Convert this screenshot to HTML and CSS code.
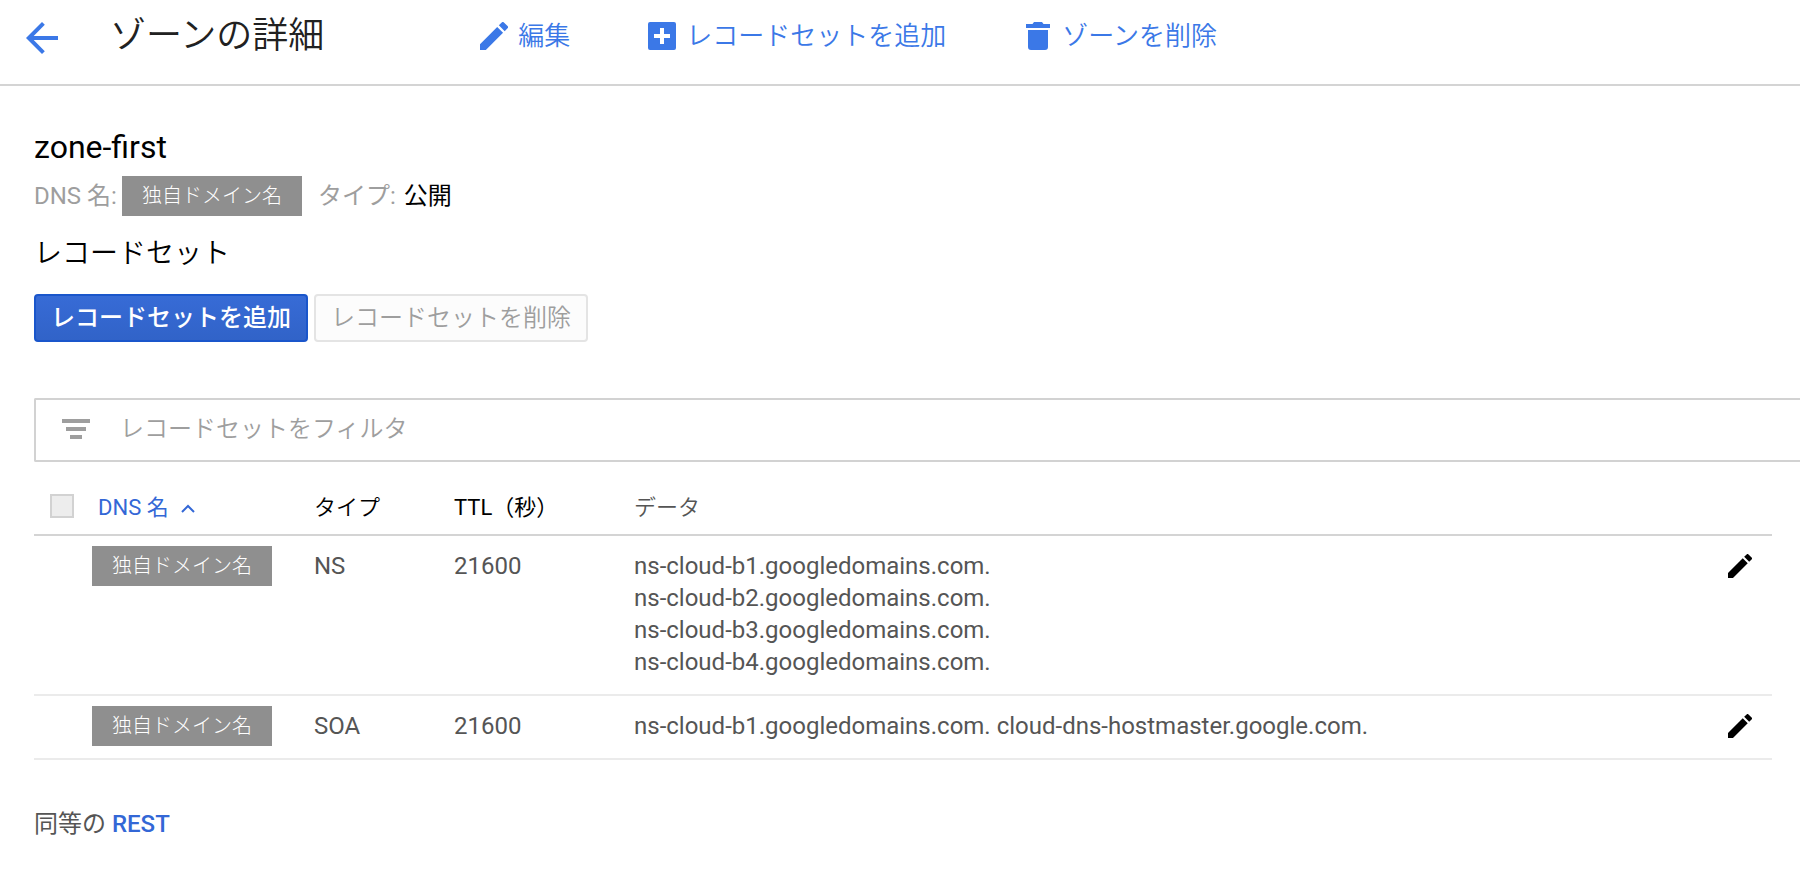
FILE: index.html
```html
<!DOCTYPE html>
<html lang="ja">
<head>
<meta charset="utf-8">
<title>ゾーンの詳細</title>
<link rel="stylesheet" href="styles.css">
</head>
<body>
<svg class="sprite" aria-hidden="true">
  <symbol id="pencil" viewBox="3 3 18 18"><path d="M3 17.25V21h3.75L17.81 9.94l-3.75-3.75L3 17.25zM20.71 7.04a1 1 0 0 0 0-1.41l-2.34-2.34a1 1 0 0 0-1.41 0l-1.83 1.83 3.75 3.75 1.83-1.83z"/></symbol>
</svg>
<header class="topbar">
  <a class="back" href="#" aria-label="戻る"><svg class="back-icon" viewBox="0 0 32 32"><path d="M32 14H7.700L18.800 2.800 16 0 0 16l16 16 2.800-2.800L7.700 18H32z"/></svg></a>
  <h1 class="title">ゾーンの詳細</h1>
  <nav class="actions">
    <button class="action" type="button"><svg class="action-icon"><use href="#pencil"/></svg>編集</button>
    <button class="action" type="button"><svg class="action-icon" viewBox="0 0 28 28"><path fill-rule="evenodd" d="M2 0h24a2 2 0 0 1 2 2v24a2 2 0 0 1-2 2H2a2 2 0 0 1-2-2V2a2 2 0 0 1 2-2zM12 6v6H6v4h6v6h4v-6h6v-4h-6V6z"/></svg>レコードセットを追加</button>
    <button class="action" type="button"><svg class="action-icon" viewBox="0 0 28 28"><path d="M4 8h20v17a3 3 0 0 1-3 3H7a3 3 0 0 1-3-3zM2 2h6.500L10 0h8l1.500 2H26v4H2z"/></svg>ゾーンを削除</button>
  </nav>
</header>
<main class="content">
  <h2 class="zone">zone-first</h2>
  <div class="meta">
    <span class="label">DNS 名:</span><span class="badge">独自ドメイン名</span>
    <span class="label kind">タイプ:</span><span>公開</span>
  </div>
  <h3 class="section">レコードセット</h3>
  <div class="buttons">
    <button class="btn primary" type="button">レコードセットを追加</button>
    <button class="btn" type="button" disabled>レコードセットを削除</button>
  </div>
  <label class="filter">
    <svg class="filter-icon" viewBox="0 0 28 20"><path d="M0 0h28v4H0zM4 8h20v4H4zM8 16h12v4H8z"/></svg>
    <input class="filter-input" type="text" placeholder="レコードセットをフィルタ" aria-label="レコードセットをフィルタ">
  </label>
  <table class="records">
    <thead>
      <tr>
        <th class="c-check"><input class="check" type="checkbox" aria-label="すべて選択" disabled></th>
        <th class="c-name"><a class="sort" href="#">DNS 名<svg class="caret" viewBox="0 0 14 9"><path d="M1 8l6-6 6 6"/></svg></a></th>
        <th class="c-type">タイプ</th>
        <th class="c-ttl">TTL（秒）</th>
        <th class="c-data">データ</th>
        <th class="c-edit"></th>
      </tr>
    </thead>
    <tbody>
      <tr>
        <td></td>
        <td><span class="badge">独自ドメイン名</span></td>
        <td>NS</td>
        <td>21600</td>
        <td>ns-cloud-b1.googledomains.com.<br>ns-cloud-b2.googledomains.com.<br>ns-cloud-b3.googledomains.com.<br>ns-cloud-b4.googledomains.com.</td>
        <td><button class="edit" type="button" aria-label="編集"><svg class="edit-icon"><use href="#pencil"/></svg></button></td>
      </tr>
      <tr>
        <td></td>
        <td><span class="badge">独自ドメイン名</span></td>
        <td>SOA</td>
        <td>21600</td>
        <td>ns-cloud-b1.googledomains.com. cloud-dns-hostmaster.google.com.</td>
        <td><button class="edit" type="button" aria-label="編集"><svg class="edit-icon"><use href="#pencil"/></svg></button></td>
      </tr>
    </tbody>
  </table>
  <p class="rest">同等の <a href="#">REST</a></p>
</main>
</body>
</html>
```
FILE: styles.css
```css
* { box-sizing: border-box; }
body {
  margin: 0;
  background: #fff;
  color: #000;
  font: 400 24px/32px Roboto, "Noto Sans CJK JP", sans-serif;
}
button, input { font: inherit; }
a { color: #3367d6; text-decoration: none; }
h1, h2, h3, p { margin: 0; font-weight: 400; }
.sprite { display: none; }

.topbar {
  display: flex;
  align-items: center;
  height: 86px;
  padding: 0 26px 12px;
  border-bottom: 2px solid #d4d4d4;
}
.back { display: flex; padding-top: 4px; }
.back-icon { width: 32px; height: 32px; fill: #3b78e7; }
.title {
  margin-left: 52px;
  font-size: 36px;
  font-weight: 350;
  line-height: 48px;
  color: #212121;
}
.actions { display: flex; gap: 78px; margin-left: 156px; }
.action {
  display: flex;
  align-items: center;
  gap: 10px;
  padding: 0;
  border: 0;
  background: none;
  color: #3b78e7;
  font-size: 26px;
  font-weight: 350;
}
.action-icon { width: 28px; height: 28px; fill: #3b78e7; }

.content { padding: 40px 28px 40px 34px; }
.zone { font-size: 32px; line-height: 42px; }
.meta { display: flex; align-items: center; margin-top: 8px; height: 40px; }
.label { color: #9e9e9e; }
.kind { margin: 0 8px 0 16px; }
.badge {
  display: inline-block;
  margin-left: 5px;
  padding: 0 20px;
  background: #8f8f8f;
  color: #fff;
  font-size: 20px;
  font-weight: 300;
  line-height: 40px;
}
.section { margin-top: 18px; font-size: 28px; font-weight: 350; line-height: 40px; }
.buttons { display: flex; gap: 6px; margin-top: 20px; }
.btn {
  height: 48px;
  padding: 0 15px;
  border: 2px solid #e4e4e4;
  border-radius: 4px;
  background: #fcfcfc;
  color: #9e9e9e;
  font-weight: 350;
  line-height: 44px;
}
.primary {
  border-color: #1a56cb;
  background: linear-gradient(#376bd6, #3163c8);
  color: #fff;
  font-weight: 500;
}
.filter {
  display: flex;
  align-items: center;
  gap: 30px;
  height: 64px;
  margin: 56px -28px 0 0;
  padding: 0 0 2px 26px;
  border: 2px solid #d2d2d2;
  border-right: 0;
  border-radius: 2px 0 0 2px;
}
.filter-icon { width: 28px; height: 20px; fill: #9e9e9e; }
.filter-input { flex: 1; padding: 0; border: 0; outline: 0; background: none; font-weight: 350; }
.filter-input::placeholder { color: #9e9e9e; }

.records {
  width: 100%;
  margin-top: 20px;
  border-collapse: separate;
  border-spacing: 0;
  table-layout: fixed;
  text-align: left;
}
.records th {
  height: 54px;
  padding: 0;
  border-bottom: 2px solid #d4d4d4;
  font-size: 22px;
  font-weight: 400;
}
.records td {
  padding: 14px 0 16px;
  border-bottom: 2px solid #ebebeb;
  color: #555;
  vertical-align: top;
}
.c-check { width: 58px; }
.c-name { width: 222px; }
.c-type { width: 140px; }
.c-ttl { width: 180px; }
.c-edit { width: 44px; }
.records .c-data { color: #555; font-weight: 350; }
.records .c-type { font-weight: 350; }
.check {
  display: block;
  appearance: none;
  width: 24px;
  height: 24px;
  margin: 0 0 4px 16px;
  border: 2px solid #d2d2d2;
  background: #ededed;
}
.sort { display: flex; align-items: center; gap: 12px; padding-left: 6px; }
.caret { width: 14px; height: 9px; fill: none; stroke: #3367d6; stroke-width: 2; }
.records .badge { display: block; width: fit-content; margin: -4px 0; }
.edit { display: block; margin: 4px 0 0; padding: 0; border: 0; background: none; }
.edit-icon { display: block; width: 24px; height: 24px; fill: #000; }
.rest { margin-top: 48px; color: #555; }
.rest a { font-weight: 500; }
```
